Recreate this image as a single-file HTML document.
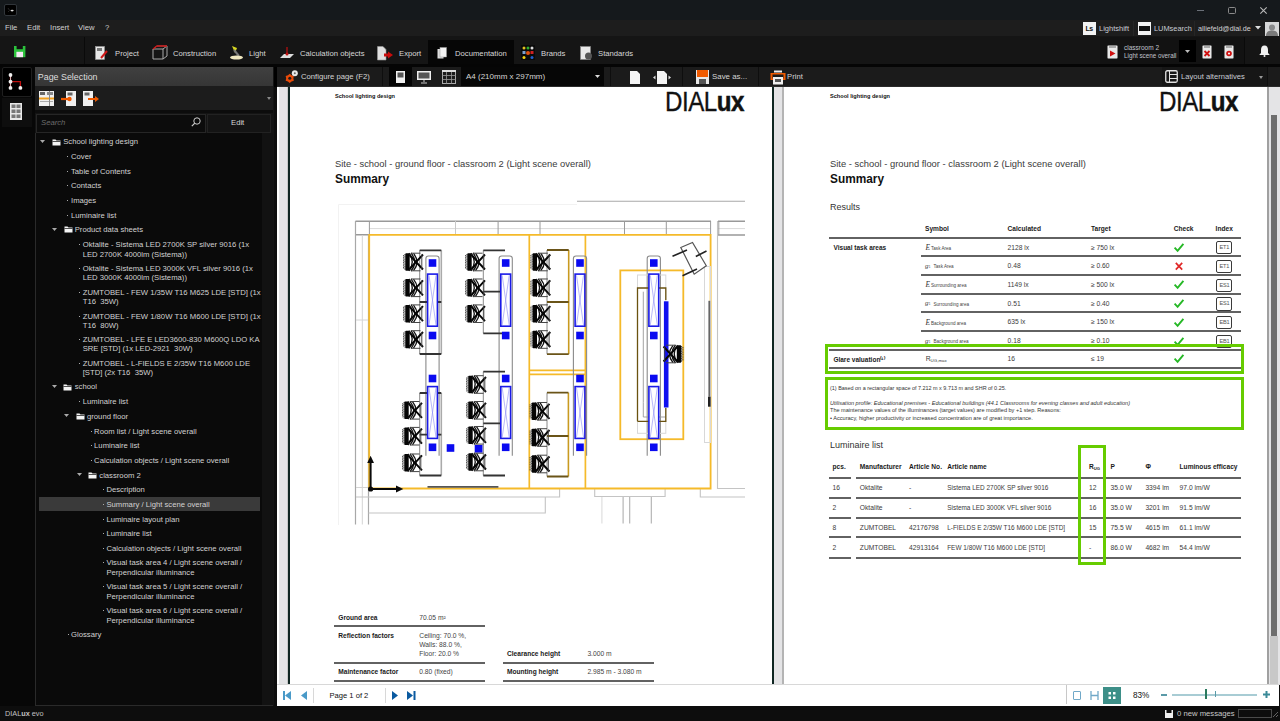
<!DOCTYPE html>
<html><head><meta charset="utf-8">
<style>
*{margin:0;padding:0;box-sizing:border-box}
html,body{width:1280px;height:721px;overflow:hidden;background:#0d0d0d;font-family:"Liberation Sans",sans-serif;position:relative}
.a{position:absolute}
.t{position:absolute;white-space:pre;line-height:1}
svg{overflow:visible}
</style></head><body>
<div class="a" style="left:0px;top:0px;width:1280px;height:20px;background:#15191c;"></div>
<div class="a" style="left:4px;top:4px;width:13px;height:12px;background:#000;border:1px solid #30353a;border-radius:2px"></div>
<svg class="a" style="left:0;top:0" width="20" height="20"><path d="M8 8L9.6 10.4L8 12" fill="none" stroke="#2a2a2a" stroke-width="0.9"/><ellipse cx="12.1" cy="10.6" rx="1.6" ry="0.8" fill="#e0e0e0"/></svg>
<div class="a" style="left:1197px;top:9.5px;width:6.5px;height:1.2px;background:#6a7078;"></div>
<div class="a" style="left:1228px;top:6.5px;width:7.5px;height:7.5px;background:transparent;border:1.1px solid #8a8a8a;border-radius:1.5px"></div>
<svg class="a" style="left:1259.7px;top:7px" width="7" height="7"><path d="M0.3 0.3L6.7 6.7M6.7 0.3L0.3 6.7" stroke="#b8b8b8" stroke-width="1.1"/></svg>
<div class="a" style="left:0px;top:20px;width:1280px;height:16px;background:#1d1d1d;"></div>
<div class="t" style="left:5px;top:23.65px;font-size:7.7px;color:#d0d0d0;font-weight:normal;">File</div>
<div class="t" style="left:27px;top:23.65px;font-size:7.7px;color:#d0d0d0;font-weight:normal;">Edit</div>
<div class="t" style="left:50px;top:23.65px;font-size:7.7px;color:#d0d0d0;font-weight:normal;">Insert</div>
<div class="t" style="left:78px;top:23.65px;font-size:7.7px;color:#d0d0d0;font-weight:normal;">View</div>
<div class="t" style="left:105px;top:23.65px;font-size:7.7px;color:#d0d0d0;font-weight:normal;">?</div>
<div class="a" style="left:1083px;top:22px;width:13px;height:13px;background:#f2f2f2;"></div>
<div class="t" style="left:1085.5px;top:25.00px;font-size:7px;color:#111;font-weight:bold;letter-spacing:-0.5px">Ls</div>
<div class="t" style="left:1099px;top:24.75px;font-size:7.5px;color:#c8ccd4;font-weight:normal;">Lightshift</div>
<div class="a" style="left:1133px;top:21px;width:1px;height:15px;background:#262626;"></div>
<div class="a" style="left:1138px;top:22px;width:13px;height:13px;background:#f2f2f2;"></div>
<div class="a" style="left:1139px;top:26px;width:11px;height:5px;background:#111;"></div>
<div class="t" style="left:1154px;top:24.80px;font-size:7.4px;color:#c8ccd4;font-weight:normal;">LUMsearch</div>
<div class="a" style="left:1194px;top:21px;width:1px;height:15px;background:#262626;"></div>
<div class="t" style="left:1198px;top:24.90px;font-size:7.2px;color:#d4d4d4;font-weight:normal;">alliefeld@dial.de</div>
<svg class="a" style="left:1255px;top:26px" width="6" height="4"><path d="M0 0H6L3 3.5Z" fill="#ddd"/></svg>
<div class="a" style="left:1265px;top:22px;width:14px;height:14px;background:#d8d8d8;"></div>
<svg class="a" style="left:1265px;top:22px" width="14" height="14"><circle cx="7" cy="5.5" r="3" fill="#8a8a8a"/><path d="M1 14C1 9.5 4 8.5 7 8.5S13 9.5 13 14Z" fill="#7a7a7a"/></svg>
<div class="a" style="left:0px;top:36px;width:1280px;height:28px;background:#151515;"></div>
<div class="a" style="left:0px;top:64px;width:1280px;height:3px;background:#050505;"></div>
<svg class="a" style="left:14px;top:46px" width="12" height="11.5"><rect x="0" y="0" width="11.4" height="11.2" fill="#2cc23c"/><rect x="2.6" y="0" width="6.2" height="3.2" fill="#111"/><rect x="2.4" y="5.8" width="6.6" height="5.4" fill="#f4e8f4"/></svg>
<div class="a" style="left:84px;top:37px;width:1px;height:27px;background:#0a0a0a;"></div>
<div class="a" style="left:428px;top:40px;width:86px;height:24px;background:#060606;"></div>
<svg class="a" style="left:95px;top:46px" width="14" height="15"><rect x="0.5" y="0.5" width="9" height="13" fill="#e8e8e8" stroke="#999" stroke-width="0.6"/><rect x="2" y="2" width="5" height="3" fill="#777"/><path d="M6 12L12 5" stroke="#d01818" stroke-width="2"/></svg>
<div class="t" style="left:115px;top:49.65px;font-size:7.7px;color:#d8d8d8;font-weight:normal;">Project</div>
<svg class="a" style="left:152px;top:45px" width="16" height="15"><path d="M1 4L5 1H15V11L11 14H1Z" fill="none" stroke="#aaa" stroke-width="1"/><path d="M1 4H11V14M11 4L15 1" fill="none" stroke="#aaa" stroke-width="1"/><path d="M1 4L5 1H15" fill="none" stroke="#c81010" stroke-width="1.3"/></svg>
<div class="t" style="left:173px;top:49.65px;font-size:7.7px;color:#d8d8d8;font-weight:normal;">Construction</div>
<svg class="a" style="left:229px;top:45px" width="15" height="15"><path d="M3 1L8 3L6 8Z" fill="#d8d820"/><path d="M5 5L10 11" stroke="#777" stroke-width="2"/><ellipse cx="7.5" cy="12.5" rx="6.5" ry="2" fill="#f0e8c0"/></svg>
<div class="t" style="left:249px;top:49.65px;font-size:7.7px;color:#d8d8d8;font-weight:normal;">Light</div>
<svg class="a" style="left:280px;top:47px" width="14" height="12"><path d="M0 11L4 7H14L10 11Z" fill="#ddd"/><path d="M7 0V7" stroke="#c01010" stroke-width="1.2"/><circle cx="7" cy="7" r="1.5" fill="#c01010"/></svg>
<div class="t" style="left:300px;top:49.65px;font-size:7.7px;color:#d8d8d8;font-weight:normal;">Calculation objects</div>
<svg class="a" style="left:377px;top:46px" width="17" height="15"><path d="M0.5 0.5H6L9 3.5V14H0.5Z" fill="#e0e0e0" stroke="#999" stroke-width="0.6"/><path d="M7 9H12" stroke="#c80c0c" stroke-width="3"/><path d="M11 5.5L16 9L11 12.5Z" fill="#c80c0c"/></svg>
<div class="t" style="left:399px;top:49.65px;font-size:7.7px;color:#d8d8d8;font-weight:normal;">Export</div>
<svg class="a" style="left:437px;top:47px" width="10" height="12"><rect x="0.5" y="2" width="6" height="9.5" fill="#ddd"/><rect x="3" y="0.5" width="6.5" height="9.5" fill="#f4f4f4" stroke="#999" stroke-width="0.5"/></svg>
<div class="t" style="left:455px;top:49.65px;font-size:7.7px;color:#d8d8d8;font-weight:normal;">Documentation</div>
<svg class="a" style="left:521px;top:45px" width="14" height="15"><rect x="0" y="0" width="14" height="15" fill="#0a0a0a"/><circle cx="3" cy="3" r="1.5" fill="#e0c020"/><circle cx="7" cy="3" r="1.5" fill="#30b030"/><circle cx="11" cy="3" r="1.5" fill="#ddd"/><rect x="1.5" y="6" width="3" height="3" fill="#7aa0d0"/><circle cx="7" cy="8" r="2" fill="#e05010"/><rect x="9.5" y="6" width="3" height="3" fill="#d02020"/><circle cx="3" cy="12.5" r="1.5" fill="#f0d010"/><circle cx="11" cy="12.5" r="1.5" fill="#2060d0"/></svg>
<div class="t" style="left:541px;top:49.65px;font-size:7.7px;color:#d8d8d8;font-weight:normal;">Brands</div>
<svg class="a" style="left:580px;top:46px" width="13" height="14"><rect x="0.5" y="0.5" width="10" height="13" fill="#e8e8e8" stroke="#888" stroke-width="0.6"/><circle cx="8.5" cy="10" r="3.5" fill="#555"/></svg>
<div class="t" style="left:598px;top:49.65px;font-size:7.7px;color:#d8d8d8;font-weight:normal;">Standards</div>
<div class="a" style="left:1100px;top:37px;width:144px;height:27px;background:#121212;"></div>
<svg class="a" style="left:1107px;top:45px" width="11" height="14"><rect x="0.5" y="0.5" width="10" height="13" rx="1" fill="#e8e8e8" stroke="#888" stroke-width="0.5"/><rect x="2" y="1.5" width="7" height="1" fill="#666"/><path d="M3 5.5L8.5 8.5L3 11.5Z" fill="#d01010"/></svg>
<div class="t" style="left:1124px;top:44.75px;font-size:6.5px;color:#c0c4cc;font-weight:normal;">classroom 2</div>
<div class="t" style="left:1124px;top:52.85px;font-size:6.3px;color:#c0c4cc;font-weight:normal;">Light scene overall</div>
<div class="a" style="left:1179px;top:40px;width:17px;height:22px;background:#000;"></div>
<svg class="a" style="left:1185px;top:50px" width="5" height="3"><path d="M0 0H5L2.5 3Z" fill="#bbb"/></svg>
<svg class="a" style="left:1202px;top:45px" width="10" height="14"><rect x="0.5" y="0.5" width="9" height="13" rx="1" fill="#e8e8e8" stroke="#888" stroke-width="0.5"/><rect x="2" y="1.5" width="6" height="1" fill="#666"/><path d="M2.5 6L7.5 11M7.5 6L2.5 11" stroke="#d01010" stroke-width="1.8"/></svg>
<svg class="a" style="left:1224px;top:45px" width="10" height="14"><rect x="0.5" y="0.5" width="9" height="13" rx="1" fill="#e8e8e8" stroke="#888" stroke-width="0.5"/><rect x="2" y="1.5" width="6" height="1" fill="#666"/><circle cx="5" cy="8.5" r="2.8" fill="#d01010"/><circle cx="5" cy="8.5" r="1" fill="#fff"/></svg>
<div class="a" style="left:1244px;top:37px;width:1px;height:27px;background:#0a0a0a;"></div>
<svg class="a" style="left:1259px;top:45px" width="11" height="12"><path d="M5.5 0.5C3 0.5 2 2.5 2 5V8L0.5 9.5V10H10.5V9.5L9 8V5C9 2.5 8 0.5 5.5 0.5Z" fill="#f0f0f0"/><circle cx="5.5" cy="11" r="1" fill="#f0f0f0"/></svg>
<div class="a" style="left:0px;top:67px;width:35px;height:640px;background:#070707;"></div>
<div class="a" style="left:2px;top:67px;width:30px;height:30px;background:#000;border:1px solid #1f1f1f;border-radius:2px"></div>
<svg class="a" style="left:0;top:67px" width="32" height="30"><path d="M10.5 8V21M10.5 14.7H20.4V21" fill="none" stroke="#c01010" stroke-width="1.3"/><path d="M10.5 8V21" stroke="#ddd" stroke-width="0.8"/><circle cx="10.5" cy="8" r="1.9" fill="#f0f0f0"/><circle cx="10.5" cy="14.7" r="1.9" fill="#f0f0f0"/><circle cx="10.5" cy="20.9" r="1.9" fill="#f0f0f0"/><circle cx="20.4" cy="20.9" r="1.9" fill="#f0f0f0"/></svg>
<div class="a" style="left:2px;top:98px;width:30px;height:29px;background:#0e0e0e;"></div>
<svg class="a" style="left:10px;top:103px" width="12" height="17"><rect x="0" y="0" width="12" height="17" fill="#e8e8e8"/><rect x="1.5" y="1.5" width="4" height="3.5" fill="#777"/><rect x="6.5" y="1.5" width="4" height="3.5" fill="#777"/><rect x="1.5" y="6.5" width="4" height="3.5" fill="#777"/><rect x="6.5" y="6.5" width="4" height="3.5" fill="#777"/><rect x="1.5" y="11.5" width="4" height="3.5" fill="#777"/><rect x="6.5" y="11.5" width="4" height="3.5" fill="#777"/></svg>
<div class="a" style="left:35px;top:67px;width:239px;height:640px;background:#141414;"></div>
<div class="a" style="left:35px;top:67px;width:238px;height:19px;background:#3c3c3c;background:linear-gradient(#404040,#363636)"></div>
<div class="t" style="left:37.8px;top:72.75px;font-size:8.9px;color:#dedede;font-weight:normal;">Page Selection</div>
<div class="a" style="left:35px;top:86px;width:238px;height:24px;background:#1c1c1c;"></div>
<div class="a" style="left:35px;top:110px;width:238px;height:3px;background:#0c0c0c;"></div>
<svg class="a" style="left:39px;top:91px" width="15" height="15"><rect x="0" y="0" width="15" height="15" fill="#f0f0f0"/><rect x="1" y="1" width="5" height="3" fill="#666"/><rect x="8" y="1" width="6" height="3" fill="#888"/><rect x="0" y="6.5" width="15" height="2" fill="#f0a020"/><rect x="1" y="10" width="13" height="1" fill="#aaa"/><rect x="10" y="0" width="1" height="15" fill="#888"/></svg>
<svg class="a" style="left:61px;top:91px" width="15" height="15"><rect x="5" y="0" width="10" height="15" fill="#f0f0f0"/><rect x="6.5" y="1.5" width="5" height="3" fill="#666"/><path d="M0 8H8" stroke="#f05a00" stroke-width="2.2"/><circle cx="8.5" cy="8" r="2.2" fill="#f05a00"/></svg>
<svg class="a" style="left:83px;top:91px" width="16" height="15"><rect x="0" y="0" width="10" height="15" fill="#f0f0f0"/><rect x="1.5" y="1.5" width="5" height="3" fill="#666"/><path d="M5 8H13" stroke="#f05a00" stroke-width="2"/><path d="M12 5L16 8L12 11Z" fill="#f05a00"/></svg>
<svg class="a" style="left:267px;top:97px" width="4" height="3"><path d="M0 0H4L2 3Z" fill="#888"/></svg>
<div class="a" style="left:36px;top:114px;width:170px;height:19px;background:#0c0c0c;border:1px solid #262626"></div>
<div class="t" style="left:41px;top:119.15px;font-size:7.7px;color:#6c6c6c;font-weight:normal;font-style:italic">Search</div>
<svg class="a" style="left:191px;top:117px" width="10" height="10"><circle cx="6" cy="4" r="3.2" fill="none" stroke="#ccc" stroke-width="1"/><path d="M3.8 6.2L0.8 9.2" stroke="#ccc" stroke-width="1.2"/></svg>
<div class="a" style="left:207px;top:114px;width:64px;height:19px;background:#141414;border:1px solid #222"></div>
<div class="t" style="left:231px;top:119.15px;font-size:7.7px;color:#d8d8d8;font-weight:normal;">Edit</div>
<div class="a" style="left:35px;top:133px;width:238px;height:573px;background:#0a0a0a;border-left:1px solid #2a2a2a;border-bottom:1px solid #2a2a2a"></div>
<div class="a" style="left:262px;top:133px;width:11px;height:572px;background:#121212;"></div>
<div class="a" style="left:39px;top:497px;width:221px;height:14px;background:#3a3a3a;"></div>
<svg class="a" style="left:40.1px;top:140.0px" width="5" height="3"><path d="M0 0H5L2.5 3Z" fill="#aaa"/></svg>
<svg class="a" style="left:52px;top:137.5px" width="9" height="8"><path d="M0.5 1.5H3.5L4.5 2.5H8.5V7.5H0.5Z" fill="#f4f4f4"/><path d="M0.5 3.5H8.5" stroke="#0a0a0a" stroke-width="0.7"/></svg>
<div class="t" style="left:63.2px;top:138.45px;font-size:7.7px;color:#d2d2d2;font-weight:normal;">School lighting design</div>
<div class="a" style="left:67px;top:156px;width:1px;height:1px;background:#aaa;"></div>
<div class="t" style="left:71px;top:153.25px;font-size:7.7px;color:#d2d2d2;font-weight:normal;">Cover</div>
<div class="a" style="left:67px;top:171px;width:1px;height:1px;background:#aaa;"></div>
<div class="t" style="left:71px;top:167.75px;font-size:7.7px;color:#d2d2d2;font-weight:normal;">Table of Contents</div>
<div class="a" style="left:67px;top:185px;width:1px;height:1px;background:#aaa;"></div>
<div class="t" style="left:71px;top:182.15px;font-size:7.7px;color:#d2d2d2;font-weight:normal;">Contacts</div>
<div class="a" style="left:67px;top:200px;width:1px;height:1px;background:#aaa;"></div>
<div class="t" style="left:71px;top:196.95px;font-size:7.7px;color:#d2d2d2;font-weight:normal;">Images</div>
<div class="a" style="left:67px;top:215px;width:1px;height:1px;background:#aaa;"></div>
<div class="t" style="left:71px;top:211.55px;font-size:7.7px;color:#d2d2d2;font-weight:normal;">Luminaire list</div>
<svg class="a" style="left:52.4px;top:227.8px" width="5" height="3"><path d="M0 0H5L2.5 3Z" fill="#aaa"/></svg>
<svg class="a" style="left:64px;top:225.3px" width="9" height="8"><path d="M0.5 1.5H3.5L4.5 2.5H8.5V7.5H0.5Z" fill="#f4f4f4"/><path d="M0.5 3.5H8.5" stroke="#0a0a0a" stroke-width="0.7"/></svg>
<div class="t" style="left:74.7px;top:226.25px;font-size:7.7px;color:#d2d2d2;font-weight:normal;">Product data sheets</div>
<div class="a" style="left:79px;top:244px;width:1px;height:1px;background:#aaa;"></div>
<div class="t" style="left:82.7px;top:241.35px;font-size:7.7px;color:#d2d2d2;font-weight:normal;">Oktalite - Sistema LED 2700K SP silver 9016 (1x</div>
<div class="t" style="left:82.7px;top:250.65px;font-size:7.7px;color:#d2d2d2;font-weight:normal;">LED 2700K 4000lm (Sistema))</div>
<div class="a" style="left:79px;top:268px;width:1px;height:1px;background:#aaa;"></div>
<div class="t" style="left:82.7px;top:264.95px;font-size:7.7px;color:#d2d2d2;font-weight:normal;">Oktalite - Sistema LED 3000K VFL silver 9016 (1x</div>
<div class="t" style="left:82.7px;top:274.25px;font-size:7.7px;color:#d2d2d2;font-weight:normal;">LED 3000K 4000lm (Sistema))</div>
<div class="a" style="left:79px;top:292px;width:1px;height:1px;background:#aaa;"></div>
<div class="t" style="left:82.7px;top:288.85px;font-size:7.7px;color:#d2d2d2;font-weight:normal;">ZUMTOBEL - FEW 1/35W T16 M625 LDE [STD] (1x</div>
<div class="t" style="left:82.7px;top:298.15px;font-size:7.7px;color:#d2d2d2;font-weight:normal;">T16  35W)</div>
<div class="a" style="left:79px;top:316px;width:1px;height:1px;background:#aaa;"></div>
<div class="t" style="left:82.7px;top:312.55px;font-size:7.7px;color:#d2d2d2;font-weight:normal;">ZUMTOBEL - FEW 1/80W T16 M600 LDE [STD] (1x</div>
<div class="t" style="left:82.7px;top:321.85px;font-size:7.7px;color:#d2d2d2;font-weight:normal;">T16  80W)</div>
<div class="a" style="left:79px;top:339px;width:1px;height:1px;background:#aaa;"></div>
<div class="t" style="left:82.7px;top:336.15px;font-size:7.7px;color:#d2d2d2;font-weight:normal;">ZUMTOBEL - LFE E LED3600-830 M600Q LDO KA</div>
<div class="t" style="left:82.7px;top:345.45px;font-size:7.7px;color:#d2d2d2;font-weight:normal;">SRE [STD] (1x LED-2921  30W)</div>
<div class="a" style="left:79px;top:363px;width:1px;height:1px;background:#aaa;"></div>
<div class="t" style="left:82.7px;top:359.75px;font-size:7.7px;color:#d2d2d2;font-weight:normal;">ZUMTOBEL - L-FIELDS E 2/35W T16 M600 LDE</div>
<div class="t" style="left:82.7px;top:369.05px;font-size:7.7px;color:#d2d2d2;font-weight:normal;">[STD] (2x T16  35W)</div>
<svg class="a" style="left:52.4px;top:385.0px" width="5" height="3"><path d="M0 0H5L2.5 3Z" fill="#aaa"/></svg>
<svg class="a" style="left:63px;top:382.5px" width="9" height="8"><path d="M0.5 1.5H3.5L4.5 2.5H8.5V7.5H0.5Z" fill="#f4f4f4"/><path d="M0.5 3.5H8.5" stroke="#0a0a0a" stroke-width="0.7"/></svg>
<div class="t" style="left:74.7px;top:383.45px;font-size:7.7px;color:#d2d2d2;font-weight:normal;">school</div>
<div class="a" style="left:79px;top:401px;width:1px;height:1px;background:#aaa;"></div>
<div class="t" style="left:82.8px;top:398.15px;font-size:7.7px;color:#d2d2d2;font-weight:normal;">Luminaire list</div>
<svg class="a" style="left:63.7px;top:414.4px" width="5" height="3"><path d="M0 0H5L2.5 3Z" fill="#aaa"/></svg>
<svg class="a" style="left:75.7px;top:411.9px" width="9" height="8"><path d="M0.5 1.5H3.5L4.5 2.5H8.5V7.5H0.5Z" fill="#f4f4f4"/><path d="M0.5 3.5H8.5" stroke="#0a0a0a" stroke-width="0.7"/></svg>
<div class="t" style="left:87px;top:412.85px;font-size:7.7px;color:#d2d2d2;font-weight:normal;">ground floor</div>
<div class="a" style="left:90.8px;top:431px;width:1px;height:1px;background:#aaa;"></div>
<div class="t" style="left:94.1px;top:427.55px;font-size:7.7px;color:#d2d2d2;font-weight:normal;">Room list / Light scene overall</div>
<div class="a" style="left:90.8px;top:445px;width:1px;height:1px;background:#aaa;"></div>
<div class="t" style="left:94.1px;top:442.25px;font-size:7.7px;color:#d2d2d2;font-weight:normal;">Luminaire list</div>
<div class="a" style="left:90.8px;top:460px;width:1px;height:1px;background:#aaa;"></div>
<div class="t" style="left:94.1px;top:456.95px;font-size:7.7px;color:#d2d2d2;font-weight:normal;">Calculation objects / Light scene overall</div>
<svg class="a" style="left:76.5px;top:473.1px" width="5" height="3"><path d="M0 0H5L2.5 3Z" fill="#aaa"/></svg>
<svg class="a" style="left:88px;top:470.6px" width="9" height="8"><path d="M0.5 1.5H3.5L4.5 2.5H8.5V7.5H0.5Z" fill="#f4f4f4"/><path d="M0.5 3.5H8.5" stroke="#0a0a0a" stroke-width="0.7"/></svg>
<div class="t" style="left:99.3px;top:471.55px;font-size:7.7px;color:#d2d2d2;font-weight:normal;">classroom 2</div>
<div class="a" style="left:103px;top:489px;width:1px;height:1px;background:#aaa;"></div>
<div class="t" style="left:106.4px;top:486.25px;font-size:7.7px;color:#d2d2d2;font-weight:normal;">Description</div>
<div class="a" style="left:103px;top:504px;width:1px;height:1px;background:#aaa;"></div>
<div class="t" style="left:106.4px;top:500.95px;font-size:7.7px;color:#d2d2d2;font-weight:normal;">Summary / Light scene overall</div>
<div class="a" style="left:103px;top:519px;width:1px;height:1px;background:#aaa;"></div>
<div class="t" style="left:106.4px;top:515.65px;font-size:7.7px;color:#d2d2d2;font-weight:normal;">Luminaire layout plan</div>
<div class="a" style="left:103px;top:533px;width:1px;height:1px;background:#aaa;"></div>
<div class="t" style="left:106.4px;top:530.25px;font-size:7.7px;color:#d2d2d2;font-weight:normal;">Luminaire list</div>
<div class="a" style="left:103px;top:548px;width:1px;height:1px;background:#aaa;"></div>
<div class="t" style="left:106.4px;top:544.95px;font-size:7.7px;color:#d2d2d2;font-weight:normal;">Calculation objects / Light scene overall</div>
<div class="a" style="left:103px;top:562px;width:1px;height:1px;background:#aaa;"></div>
<div class="t" style="left:106.4px;top:559.35px;font-size:7.7px;color:#d2d2d2;font-weight:normal;">Visual task area 4 / Light scene overall /</div>
<div class="t" style="left:106.4px;top:568.75px;font-size:7.7px;color:#d2d2d2;font-weight:normal;">Perpendicular illuminance</div>
<div class="a" style="left:103px;top:586px;width:1px;height:1px;background:#aaa;"></div>
<div class="t" style="left:106.4px;top:583.25px;font-size:7.7px;color:#d2d2d2;font-weight:normal;">Visual task area 5 / Light scene overall /</div>
<div class="t" style="left:106.4px;top:592.65px;font-size:7.7px;color:#d2d2d2;font-weight:normal;">Perpendicular illuminance</div>
<div class="a" style="left:103px;top:610px;width:1px;height:1px;background:#aaa;"></div>
<div class="t" style="left:106.4px;top:607.25px;font-size:7.7px;color:#d2d2d2;font-weight:normal;">Visual task area 6 / Light scene overall /</div>
<div class="t" style="left:106.4px;top:616.65px;font-size:7.7px;color:#d2d2d2;font-weight:normal;">Perpendicular illuminance</div>
<div class="a" style="left:67.6px;top:634px;width:1px;height:1px;background:#aaa;"></div>
<div class="t" style="left:71px;top:630.85px;font-size:7.7px;color:#d2d2d2;font-weight:normal;">Glossary</div>
<div class="a" style="left:274px;top:67px;width:1006px;height:20px;background:#000;"></div>
<div class="a" style="left:277px;top:67px;width:1003px;height:19px;background:#1b1b1b;"></div>
<svg class="a" style="left:280px;top:66px" width="30" height="22"><path d="M9.75 7.65L11.55 9.23L13.82 10.00L13.35 12.35L13.82 14.70L11.55 15.47L9.75 17.05L7.95 15.47L5.68 14.70L6.15 12.35L5.68 10.00L7.95 9.23Z" fill="#e84a08"/><circle cx="9.75" cy="12.349999999999994" r="1.5" fill="#1b1b1b"/><circle cx="14.8" cy="7.3" r="3" fill="#e8e8e8"/><circle cx="14.8" cy="7.3" r="1" fill="#666"/></svg>
<div class="t" style="left:301px;top:73.15px;font-size:7.7px;color:#d4d4d4;font-weight:normal;">Configure page (F2)</div>
<div class="a" style="left:382px;top:67px;width:1px;height:19px;background:#0e0e0e;"></div>
<div class="a" style="left:389px;top:67px;width:23px;height:19px;background:#050505;"></div>
<svg class="a" style="left:396px;top:71px" width="9" height="12"><rect x="0" y="0" width="9" height="12" fill="#f0f0f0"/><rect x="1.5" y="1.5" width="6" height="5" fill="#555"/></svg>
<svg class="a" style="left:417px;top:71px" width="14" height="12"><rect x="0" y="0" width="14" height="9" fill="#eee"/><rect x="1.5" y="1.5" width="11" height="6" fill="#555"/><path d="M7 9V11M4 12H10" stroke="#ccc" stroke-width="1"/></svg>
<svg class="a" style="left:442px;top:70px" width="14" height="14"><rect x="0.5" y="0.5" width="13" height="13" fill="none" stroke="#aaa"/><rect x="0" y="0" width="14" height="2" fill="#ddd"/><path d="M4.5 2V14M9.5 2V14M0 5.5H14M0 9.5H14" stroke="#999" stroke-width="0.8"/></svg>
<div class="a" style="left:461px;top:67px;width:143px;height:19px;background:#060606;"></div>
<div class="t" style="left:466px;top:72.50px;font-size:8.0px;color:#d4d4d4;font-weight:normal;">A4 (210mm x 297mm)</div>
<svg class="a" style="left:595px;top:75px" width="5" height="3"><path d="M0 0H5L2.5 3Z" fill="#ddd"/></svg>
<div class="a" style="left:610px;top:67px;width:1px;height:19px;background:#0e0e0e;"></div>
<svg class="a" style="left:630px;top:71px" width="10" height="13"><path d="M0 0H7L10 3V13H0Z" fill="#f4f4f4"/></svg>
<svg class="a" style="left:653px;top:71px" width="18" height="13"><path d="M4 0H11L14 3V13H4Z" fill="#f4f4f4"/><path d="M0 6.5L2.5 4.5V8.5Z M18 6.5L15.5 4.5V8.5Z" fill="#ddd"/></svg>
<div class="a" style="left:682px;top:67px;width:1px;height:19px;background:#0e0e0e;"></div>
<svg class="a" style="left:696px;top:70px" width="13" height="14"><rect x="0" y="0" width="13" height="14" fill="#e8e8e8"/><rect x="1" y="0" width="11" height="7" fill="#f05a00"/><rect x="3" y="9" width="7" height="5" fill="#555"/></svg>
<div class="t" style="left:712px;top:72.55px;font-size:7.9px;color:#d4d4d4;font-weight:normal;">Save as...</div>
<div class="a" style="left:758px;top:67px;width:1px;height:19px;background:#0e0e0e;"></div>
<svg class="a" style="left:770px;top:70px" width="16" height="15"><rect x="4" y="0.5" width="8" height="2" fill="#eee"/><rect x="0.5" y="3" width="15" height="7" fill="#f05a00"/><rect x="2.5" y="4.5" width="11" height="4" fill="#1b1b1b"/><rect x="3" y="7" width="10" height="7.5" fill="#f0f0f0"/><rect x="5" y="9" width="6" height="3" fill="#555"/></svg>
<div class="t" style="left:787px;top:73.15px;font-size:7.7px;color:#d4d4d4;font-weight:normal;">Print</div>
<div class="a" style="left:1162px;top:67px;width:105px;height:19px;background:#161616;"></div>
<svg class="a" style="left:1165px;top:70px" width="13" height="13"><rect x="0.75" y="0.75" width="11.5" height="11.5" rx="1.5" fill="none" stroke="#e0e0e0" stroke-width="1.3"/><path d="M4.5 1V12M4.5 4.5H12M4.5 8.5H12" stroke="#e0e0e0" stroke-width="1"/></svg>
<div class="t" style="left:1181px;top:73.20px;font-size:7.6px;color:#c8ccd4;font-weight:normal;">Layout alternatives</div>
<svg class="a" style="left:1259px;top:76px" width="4" height="3"><path d="M0 0H4L2 3Z" fill="#999"/></svg>
<div class="a" style="left:1267px;top:67px;width:1px;height:19px;background:#0e0e0e;"></div>
<div class="a" style="left:277px;top:86px;width:1003px;height:599px;background:#ffffff;"></div>
<div class="a" style="left:277px;top:86px;width:1003px;height:1px;background:#2a2a2a;"></div>
<div class="a" style="left:279px;top:87px;width:8px;height:597px;background:#e4e4e6;"></div>
<div class="a" style="left:287px;top:87px;width:2px;height:597px;background:#c8c8c8;"></div>
<div class="a" style="left:288px;top:87px;width:2px;height:597px;background:#0f2622;"></div>
<div class="a" style="left:772px;top:87px;width:2px;height:597px;background:#0f2622;"></div>
<div class="a" style="left:774px;top:87px;width:8px;height:597px;background:#e4e4e6;"></div>
<div class="a" style="left:782px;top:87px;width:2px;height:597px;background:#b4b4b4;"></div>
<div class="a" style="left:1267px;top:87px;width:2px;height:597px;background:#a0a0a0;"></div>
<div class="a" style="left:1269px;top:87px;width:11px;height:597px;background:#e4e4e6;"></div>
<div class="a" style="left:1271px;top:115px;width:6px;height:521px;background:#6e6e6e;"></div>
<div class="a" style="left:1270px;top:636px;width:8px;height:48px;background:#c8c8c8;"></div>
<div class="a" style="left:277px;top:684px;width:1003px;height:1px;background:#d8d8d8;"></div>
<div class="a" style="left:277px;top:685px;width:1002px;height:21px;background:#ffffff;"></div>
<svg class="a" style="left:283px;top:691px" width="8" height="9"><rect x="0" y="0" width="2" height="9" fill="#4a9ac8"/><path d="M8 0V9L2 4.5Z" fill="#4a9ac8"/></svg>
<svg class="a" style="left:301px;top:691px" width="6" height="9"><path d="M6 0V9L0 4.5Z" fill="#4a9ac8"/></svg>
<div class="a" style="left:313px;top:688px;width:1px;height:15px;background:#d8d8d8;"></div>
<div class="t" style="left:329.5px;top:692.20px;font-size:7.6px;color:#111;font-weight:normal;">Page 1 of 2</div>
<div class="a" style="left:385px;top:688px;width:1px;height:15px;background:#d8d8d8;"></div>
<svg class="a" style="left:392px;top:691px" width="6" height="9"><path d="M0 0V9L6 4.5Z" fill="#0a5aa0"/></svg>
<svg class="a" style="left:407px;top:691px" width="9" height="9"><path d="M0 0V9L6 4.5Z" fill="#0a5aa0"/><rect x="6.5" y="0" width="2" height="9" fill="#0a5aa0"/></svg>
<div class="a" style="left:1066px;top:685px;width:1px;height:19px;background:#c8c8c8;"></div>
<div class="a" style="left:1073px;top:691px;width:8px;height:9px;background:transparent;border:1.3px solid #70a8c8;border-radius:1px"></div>
<svg class="a" style="left:1090px;top:691px" width="9" height="9"><path d="M1 0V9M8 0V9M1 4.5H8" stroke="#70a8c8" stroke-width="1.3"/></svg>
<div class="a" style="left:1103px;top:687px;width:18px;height:17px;background:#3d8f88;"></div>
<svg class="a" style="left:1103px;top:687px" width="18" height="17"><rect x="5.5" y="5" width="2.5" height="2.5" fill="#fff"/><rect x="10" y="5" width="2.5" height="2.5" fill="#fff"/><rect x="5.5" y="9.5" width="2.5" height="2.5" fill="#fff"/><rect x="10" y="9.5" width="2.5" height="2.5" fill="#fff"/></svg>
<div class="t" style="left:1133px;top:692.20px;font-size:8.2px;color:#111;font-weight:normal;">83%</div>
<div class="a" style="left:1161px;top:694px;width:6px;height:2px;background:#5a9aa8;"></div>
<div class="a" style="left:1172px;top:694px;width:85px;height:2px;background:#a8ccd4;"></div>
<div class="a" style="left:1205px;top:689px;width:2px;height:10px;background:#2a7a5e;"></div>
<div class="a" style="left:1215px;top:691px;width:1px;height:6px;background:#5a9aa8;"></div>
<svg class="a" style="left:1263px;top:691px" width="7" height="7"><path d="M3.5 0V7M0 3.5H7" stroke="#3a8a98" stroke-width="2"/></svg>
<div class="a" style="left:0px;top:706px;width:1280px;height:15px;background:#0d0d0d;"></div>
<div class="t" style="left:5px;top:709.85px;font-size:7.3px;color:#c0c0c0;font-weight:normal;">DIAL<b>ux</b> evo</div>
<svg class="a" style="left:1165px;top:710px" width="8" height="8"><rect x="0" y="0" width="8" height="8" fill="#f0f0f0"/><rect x="1.5" y="0" width="5" height="3" fill="#0d0d0d"/></svg>
<div class="t" style="left:1177px;top:710.15px;font-size:7.7px;color:#c8c8c8;font-weight:normal;">0 new messages</div>
<div class="a" style="left:1238px;top:709px;width:34px;height:9px;background:transparent;border:1px solid #4a4a4a"></div>
<svg class="a" style="left:1272px;top:711px" width="7" height="7"><path d="M6 1L1 6M6 4L4 6" stroke="#777" stroke-width="0.8"/></svg>
<div class="t" style="left:335px;top:93.80px;font-size:5.6px;color:#111;font-weight:bold;">School lighting design</div>
<div class="t" style="left:665px;top:87.4px;font-size:28.3px;color:#111;letter-spacing:-0.6px;transform:scaleX(0.854);transform-origin:0 0;-webkit-text-stroke:0.35px #111">DIAL<b style="font-weight:bold;-webkit-text-stroke:0.5px #111">ux</b></div>
<div class="t" style="left:335px;top:158.70px;font-size:9.4px;color:#3a3a3a;font-weight:normal;">Site - school - ground floor - classroom 2 (Light scene overall)</div>
<div class="t" style="left:335px;top:173.67px;font-size:11.85px;color:#111;font-weight:bold;">Summary</div>
<svg class="a" style="left:0;top:0" width="1280" height="721"><path fill="none" d="M338.5 525V204.5H577" stroke="#f2f2f2" stroke-width="1"/><path fill="none" d="M577 201.3H745" stroke="#a8a8a8" stroke-width="1.1"/><path fill="none" d="M355.5 221.3H711M718 221.3H745M718 235H745M355.5 234.8H369" stroke="#999" stroke-width="1.4"/><path fill="none" d="M369 228.6H711M718 228.6H745" stroke="#dadada" stroke-width="1"/><path fill="none" d="M369.4 221V235M498.1 221V235M540 221V235M624.5 221V235M666.3 221V235M710.6 221V235M718.8 221V235" stroke="#9a9a9a" stroke-width="1"/><path fill="none" d="M455.5 221V235" stroke="#c8c8c8" stroke-width="1"/><path fill="none" d="M355.5 221V524.5M368.5 235V524.5" stroke="#a8a8a8" stroke-width="1.2"/><path fill="none" d="M362.3 235V524.5M356 320H368M356 487.5H368" stroke="#d4d4d4" stroke-width="1"/><path fill="none" d="M717.5 221V488.5H745" stroke="#c4c4c4" stroke-width="1.1"/><path fill="none" d="M356 497H559.6V488.5M368.5 513H545.3V497M594.7 488.5V496.5H665.1V488.5M700.3 488.5V497H745" stroke="#c4c4c4" stroke-width="1.1"/><path fill="none" d="M623.1 497V523.6M629.7 497V523.6M651.3 497V523.6" stroke="#b0b0b0" stroke-width="1.1"/><path fill="none" d="M601.9 497V523.6" stroke="#dcdcdc" stroke-width="1.1"/><path d="M369.2 234.8H710.6V488.5H369.2Z" fill="none" stroke="#f5ba2a" stroke-width="1.8"/><path fill="none" d="M529.3 234.8V488.5M585.4 234.8V488.5M529.3 370.3H585.4M529.3 374.3H585.4" stroke="#f5ba2a" stroke-width="1.7"/><rect x="620.3" y="270.4" width="63" height="168.8" fill="none" stroke="#f5ba2a" stroke-width="1.8"/><path fill="none" d="M427.5 486.8H498.4" stroke="#555" stroke-width="1.8"/><path d="M425.9 258.5Q425.9 256 428.5 256H436.5Q439.1 256 439.1 258.5V455.8M425.9 258.5V455.8" fill="none" stroke="#8a8a8a" stroke-width="1.1"/><path d="M499.09999999999997 258.5Q499.09999999999997 256 501.7 256H509.7Q512.3 256 512.3 258.5V455.8M499.09999999999997 258.5V455.8" fill="none" stroke="#8a8a8a" stroke-width="1.1"/><path d="M573.4 258.5Q573.4 256 576 256H584Q586.6 256 586.6 258.5V455.8M573.4 258.5V455.8" fill="none" stroke="#8a8a8a" stroke-width="1.1"/><path d="M647.1999999999999 258.5Q647.1999999999999 256 649.8 256H657.8Q660.4 256 660.4 258.5V455.8M647.1999999999999 258.5V455.8" fill="none" stroke="#8a8a8a" stroke-width="1.1"/><path fill="none" d="M441.3 250.3V354" stroke="#aaa" stroke-width="1.6"/><path fill="none" d="M419.7 250.3V354" stroke="#8a8a8a" stroke-width="1"/><path fill="none" d="M419.7 250.3H441.3M419.7 354H441.3M419.7 302H441.3" stroke="#333" stroke-width="1.8"/><path fill="none" d="M483.3 250.3V333.3" stroke="#8a8a8a" stroke-width="1"/><path fill="none" d="M483.3 250.3H505M483.3 333.3H505M483.3 291.7H505" stroke="#333" stroke-width="1.8"/><path fill="none" d="M568.7 250V354.2" stroke="#c99a20" stroke-width="1.6"/><path fill="none" d="M547 250V354.2" stroke="#8a8a8a" stroke-width="1"/><path fill="none" d="M547 250H568.7M547 354.2H568.7M547 302H568.7" stroke="#6a5418" stroke-width="1.8"/><path fill="none" d="M441.3 393V475.5" stroke="#aaa" stroke-width="1.6"/><path fill="none" d="M419.7 393V475.5" stroke="#8a8a8a" stroke-width="1"/><path fill="none" d="M419.7 393H441.3M419.7 475.5H441.3M419.7 434.7H441.3" stroke="#333" stroke-width="1.8"/><path fill="none" d="M483.3 371.7V475.5" stroke="#8a8a8a" stroke-width="1"/><path fill="none" d="M483.3 371.7H505M483.3 475.5H505M483.3 423.3H505" stroke="#333" stroke-width="1.8"/><path fill="none" d="M568.4 392.6V476.5" stroke="#c99a20" stroke-width="1.6"/><path fill="none" d="M547 392.6V476.5" stroke="#8a8a8a" stroke-width="1"/><path fill="none" d="M547 392.6H568.4M547 476.5H568.4M547 436H568.4" stroke="#6a5418" stroke-width="1.8"/><rect x="637.5" y="275" width="28.3" height="158.3" fill="none" stroke="#d8d8d8" stroke-width="1"/><path d="M637.5 421.3V288H665.8V300M637.5 421.3H665.8V408" fill="none" stroke="#6a5210" stroke-width="1.3"/><path d="M643.3 291.7V402.5M643.3 402.5V417H665" fill="none" stroke="#999" stroke-width="0.9"/><rect x="428.7" y="259.2" width="7.6" height="7.6" fill="#0a0af0"/><rect x="428.7" y="331.7" width="7.6" height="7.6" fill="#0a0af0"/><rect x="427.6" y="274.1" width="9.8" height="52.09999999999999" fill="#fff" stroke="#1a1ae8" stroke-width="1.6"/><path fill="none" d="M429.0 275.3L436.0 325M436.0 275.3L429.0 325" stroke="#8888f4" stroke-width="0.6"/><rect x="428.7" y="374.7" width="7.6" height="7.6" fill="#0a0af0"/><rect x="428.7" y="443.5" width="7.6" height="7.6" fill="#0a0af0"/><rect x="427.6" y="386.6" width="9.8" height="51.799999999999976" fill="#fff" stroke="#1a1ae8" stroke-width="1.6"/><path fill="none" d="M429.0 387.8L436.0 437.2M436.0 387.8L429.0 437.2" stroke="#8888f4" stroke-width="0.6"/><rect x="501.9" y="259.2" width="7.6" height="7.6" fill="#0a0af0"/><rect x="501.9" y="331.7" width="7.6" height="7.6" fill="#0a0af0"/><rect x="500.8" y="274.1" width="9.8" height="52.09999999999999" fill="#fff" stroke="#1a1ae8" stroke-width="1.6"/><path fill="none" d="M502.2 275.3L509.2 325M509.2 275.3L502.2 325" stroke="#8888f4" stroke-width="0.6"/><rect x="501.9" y="374.7" width="7.6" height="7.6" fill="#0a0af0"/><rect x="501.9" y="443.5" width="7.6" height="7.6" fill="#0a0af0"/><rect x="500.8" y="386.6" width="9.8" height="51.799999999999976" fill="#fff" stroke="#1a1ae8" stroke-width="1.6"/><path fill="none" d="M502.2 387.8L509.2 437.2M509.2 387.8L502.2 437.2" stroke="#8888f4" stroke-width="0.6"/><rect x="576.2" y="259.2" width="7.6" height="7.6" fill="#0a0af0"/><rect x="576.2" y="331.7" width="7.6" height="7.6" fill="#0a0af0"/><rect x="575.1" y="274.1" width="9.8" height="52.09999999999999" fill="#fff" stroke="#1a1ae8" stroke-width="1.6"/><path fill="none" d="M576.5 275.3L583.5 325M583.5 275.3L576.5 325" stroke="#8888f4" stroke-width="0.6"/><rect x="576.2" y="374.7" width="7.6" height="7.6" fill="#0a0af0"/><rect x="576.2" y="443.5" width="7.6" height="7.6" fill="#0a0af0"/><rect x="575.1" y="386.6" width="9.8" height="51.799999999999976" fill="#fff" stroke="#1a1ae8" stroke-width="1.6"/><path fill="none" d="M576.5 387.8L583.5 437.2M583.5 387.8L576.5 437.2" stroke="#8888f4" stroke-width="0.6"/><rect x="650.0" y="259.2" width="7.6" height="7.6" fill="#0a0af0"/><rect x="650.0" y="331.7" width="7.6" height="7.6" fill="#0a0af0"/><rect x="648.9" y="274.1" width="9.8" height="52.09999999999999" fill="#fff" stroke="#1a1ae8" stroke-width="1.6"/><path fill="none" d="M650.3 275.3L657.3 325M657.3 275.3L650.3 325" stroke="#8888f4" stroke-width="0.6"/><rect x="650.0" y="374.7" width="7.6" height="7.6" fill="#0a0af0"/><rect x="650.0" y="443.5" width="7.6" height="7.6" fill="#0a0af0"/><rect x="648.9" y="386.6" width="9.8" height="51.799999999999976" fill="#fff" stroke="#1a1ae8" stroke-width="1.6"/><path fill="none" d="M650.3 387.8L657.3 437.2M657.3 387.8L650.3 437.2" stroke="#8888f4" stroke-width="0.6"/><rect x="446.7" y="444.2" width="7.6" height="7.6" fill="#0a0af0"/><rect x="474.7" y="445" width="7.8" height="7.6" fill="#0a0af0"/><path fill="none" d="M666.2 301.3V407.5" stroke="#1010f0" stroke-width="4.6"/><rect x="704.5" y="266.5" width="6" height="176" fill="none" stroke="#d8d8d8" stroke-width="1"/><path fill="none" d="M709.3 300.8V396.7" stroke="#666" stroke-width="1.8"/><path fill="none" d="M709.3 396.7V406.7" stroke="#222" stroke-width="2.6"/><g transform="translate(403,252.0)"><path fill="none" d="M0.6 3V17M1.9 2V18" stroke="#333" stroke-width="0.9" stroke-dasharray="1.2 0.5"/><rect x="2.3" y="1.2" width="4.4" height="17.6" rx="0.8" fill="#050505"/><path fill="none" d="M6 1.2Q12.5 10 6 18.8M8 1Q15.5 10 8 19M10.5 1.4Q17.5 10 10.5 18.6" stroke="#111" stroke-width="1.3"/><path fill="none" d="M6.5 3L20 17.5M6.5 17L20 2.5" stroke="#050505" stroke-width="1.9"/><path fill="none" d="M8 1.2H17.5M8 18.8H17.5M18.8 2.5V17.5" stroke="#444" stroke-width="1"/></g><g transform="translate(403,277.8)"><path fill="none" d="M0.6 3V17M1.9 2V18" stroke="#333" stroke-width="0.9" stroke-dasharray="1.2 0.5"/><rect x="2.3" y="1.2" width="4.4" height="17.6" rx="0.8" fill="#050505"/><path fill="none" d="M6 1.2Q12.5 10 6 18.8M8 1Q15.5 10 8 19M10.5 1.4Q17.5 10 10.5 18.6" stroke="#111" stroke-width="1.3"/><path fill="none" d="M6.5 3L20 17.5M6.5 17L20 2.5" stroke="#050505" stroke-width="1.9"/><path fill="none" d="M8 1.2H17.5M8 18.8H17.5M18.8 2.5V17.5" stroke="#444" stroke-width="1"/></g><g transform="translate(403,303.7)"><path fill="none" d="M0.6 3V17M1.9 2V18" stroke="#333" stroke-width="0.9" stroke-dasharray="1.2 0.5"/><rect x="2.3" y="1.2" width="4.4" height="17.6" rx="0.8" fill="#050505"/><path fill="none" d="M6 1.2Q12.5 10 6 18.8M8 1Q15.5 10 8 19M10.5 1.4Q17.5 10 10.5 18.6" stroke="#111" stroke-width="1.3"/><path fill="none" d="M6.5 3L20 17.5M6.5 17L20 2.5" stroke="#050505" stroke-width="1.9"/><path fill="none" d="M8 1.2H17.5M8 18.8H17.5M18.8 2.5V17.5" stroke="#444" stroke-width="1"/></g><g transform="translate(403,329.5)"><path fill="none" d="M0.6 3V17M1.9 2V18" stroke="#333" stroke-width="0.9" stroke-dasharray="1.2 0.5"/><rect x="2.3" y="1.2" width="4.4" height="17.6" rx="0.8" fill="#050505"/><path fill="none" d="M6 1.2Q12.5 10 6 18.8M8 1Q15.5 10 8 19M10.5 1.4Q17.5 10 10.5 18.6" stroke="#111" stroke-width="1.3"/><path fill="none" d="M6.5 3L20 17.5M6.5 17L20 2.5" stroke="#050505" stroke-width="1.9"/><path fill="none" d="M8 1.2H17.5M8 18.8H17.5M18.8 2.5V17.5" stroke="#444" stroke-width="1"/></g><g transform="translate(402,400.3)"><path fill="none" d="M0.6 3V17M1.9 2V18" stroke="#333" stroke-width="0.9" stroke-dasharray="1.2 0.5"/><rect x="2.3" y="1.2" width="4.4" height="17.6" rx="0.8" fill="#050505"/><path fill="none" d="M6 1.2Q12.5 10 6 18.8M8 1Q15.5 10 8 19M10.5 1.4Q17.5 10 10.5 18.6" stroke="#111" stroke-width="1.3"/><path fill="none" d="M6.5 3L20 17.5M6.5 17L20 2.5" stroke="#050505" stroke-width="1.9"/><path fill="none" d="M8 1.2H17.5M8 18.8H17.5M18.8 2.5V17.5" stroke="#444" stroke-width="1"/></g><g transform="translate(402,426.2)"><path fill="none" d="M0.6 3V17M1.9 2V18" stroke="#333" stroke-width="0.9" stroke-dasharray="1.2 0.5"/><rect x="2.3" y="1.2" width="4.4" height="17.6" rx="0.8" fill="#050505"/><path fill="none" d="M6 1.2Q12.5 10 6 18.8M8 1Q15.5 10 8 19M10.5 1.4Q17.5 10 10.5 18.6" stroke="#111" stroke-width="1.3"/><path fill="none" d="M6.5 3L20 17.5M6.5 17L20 2.5" stroke="#050505" stroke-width="1.9"/><path fill="none" d="M8 1.2H17.5M8 18.8H17.5M18.8 2.5V17.5" stroke="#444" stroke-width="1"/></g><g transform="translate(402,452.8)"><path fill="none" d="M0.6 3V17M1.9 2V18" stroke="#333" stroke-width="0.9" stroke-dasharray="1.2 0.5"/><rect x="2.3" y="1.2" width="4.4" height="17.6" rx="0.8" fill="#050505"/><path fill="none" d="M6 1.2Q12.5 10 6 18.8M8 1Q15.5 10 8 19M10.5 1.4Q17.5 10 10.5 18.6" stroke="#111" stroke-width="1.3"/><path fill="none" d="M6.5 3L20 17.5M6.5 17L20 2.5" stroke="#050505" stroke-width="1.9"/><path fill="none" d="M8 1.2H17.5M8 18.8H17.5M18.8 2.5V17.5" stroke="#444" stroke-width="1"/></g><g transform="translate(465,252.0)"><path fill="none" d="M0.6 3V17M1.9 2V18" stroke="#333" stroke-width="0.9" stroke-dasharray="1.2 0.5"/><rect x="2.3" y="1.2" width="4.4" height="17.6" rx="0.8" fill="#050505"/><path fill="none" d="M6 1.2Q12.5 10 6 18.8M8 1Q15.5 10 8 19M10.5 1.4Q17.5 10 10.5 18.6" stroke="#111" stroke-width="1.3"/><path fill="none" d="M6.5 3L20 17.5M6.5 17L20 2.5" stroke="#050505" stroke-width="1.9"/><path fill="none" d="M8 1.2H17.5M8 18.8H17.5M18.8 2.5V17.5" stroke="#444" stroke-width="1"/></g><g transform="translate(465,277.8)"><path fill="none" d="M0.6 3V17M1.9 2V18" stroke="#333" stroke-width="0.9" stroke-dasharray="1.2 0.5"/><rect x="2.3" y="1.2" width="4.4" height="17.6" rx="0.8" fill="#050505"/><path fill="none" d="M6 1.2Q12.5 10 6 18.8M8 1Q15.5 10 8 19M10.5 1.4Q17.5 10 10.5 18.6" stroke="#111" stroke-width="1.3"/><path fill="none" d="M6.5 3L20 17.5M6.5 17L20 2.5" stroke="#050505" stroke-width="1.9"/><path fill="none" d="M8 1.2H17.5M8 18.8H17.5M18.8 2.5V17.5" stroke="#444" stroke-width="1"/></g><g transform="translate(465,303.7)"><path fill="none" d="M0.6 3V17M1.9 2V18" stroke="#333" stroke-width="0.9" stroke-dasharray="1.2 0.5"/><rect x="2.3" y="1.2" width="4.4" height="17.6" rx="0.8" fill="#050505"/><path fill="none" d="M6 1.2Q12.5 10 6 18.8M8 1Q15.5 10 8 19M10.5 1.4Q17.5 10 10.5 18.6" stroke="#111" stroke-width="1.3"/><path fill="none" d="M6.5 3L20 17.5M6.5 17L20 2.5" stroke="#050505" stroke-width="1.9"/><path fill="none" d="M8 1.2H17.5M8 18.8H17.5M18.8 2.5V17.5" stroke="#444" stroke-width="1"/></g><g transform="translate(466,374.5)"><path fill="none" d="M0.6 3V17M1.9 2V18" stroke="#333" stroke-width="0.9" stroke-dasharray="1.2 0.5"/><rect x="2.3" y="1.2" width="4.4" height="17.6" rx="0.8" fill="#050505"/><path fill="none" d="M6 1.2Q12.5 10 6 18.8M8 1Q15.5 10 8 19M10.5 1.4Q17.5 10 10.5 18.6" stroke="#111" stroke-width="1.3"/><path fill="none" d="M6.5 3L20 17.5M6.5 17L20 2.5" stroke="#050505" stroke-width="1.9"/><path fill="none" d="M8 1.2H17.5M8 18.8H17.5M18.8 2.5V17.5" stroke="#444" stroke-width="1"/></g><g transform="translate(466,400.3)"><path fill="none" d="M0.6 3V17M1.9 2V18" stroke="#333" stroke-width="0.9" stroke-dasharray="1.2 0.5"/><rect x="2.3" y="1.2" width="4.4" height="17.6" rx="0.8" fill="#050505"/><path fill="none" d="M6 1.2Q12.5 10 6 18.8M8 1Q15.5 10 8 19M10.5 1.4Q17.5 10 10.5 18.6" stroke="#111" stroke-width="1.3"/><path fill="none" d="M6.5 3L20 17.5M6.5 17L20 2.5" stroke="#050505" stroke-width="1.9"/><path fill="none" d="M8 1.2H17.5M8 18.8H17.5M18.8 2.5V17.5" stroke="#444" stroke-width="1"/></g><g transform="translate(466,425.3)"><path fill="none" d="M0.6 3V17M1.9 2V18" stroke="#333" stroke-width="0.9" stroke-dasharray="1.2 0.5"/><rect x="2.3" y="1.2" width="4.4" height="17.6" rx="0.8" fill="#050505"/><path fill="none" d="M6 1.2Q12.5 10 6 18.8M8 1Q15.5 10 8 19M10.5 1.4Q17.5 10 10.5 18.6" stroke="#111" stroke-width="1.3"/><path fill="none" d="M6.5 3L20 17.5M6.5 17L20 2.5" stroke="#050505" stroke-width="1.9"/><path fill="none" d="M8 1.2H17.5M8 18.8H17.5M18.8 2.5V17.5" stroke="#444" stroke-width="1"/></g><g transform="translate(466,452.0)"><path fill="none" d="M0.6 3V17M1.9 2V18" stroke="#333" stroke-width="0.9" stroke-dasharray="1.2 0.5"/><rect x="2.3" y="1.2" width="4.4" height="17.6" rx="0.8" fill="#050505"/><path fill="none" d="M6 1.2Q12.5 10 6 18.8M8 1Q15.5 10 8 19M10.5 1.4Q17.5 10 10.5 18.6" stroke="#111" stroke-width="1.3"/><path fill="none" d="M6.5 3L20 17.5M6.5 17L20 2.5" stroke="#050505" stroke-width="1.9"/><path fill="none" d="M8 1.2H17.5M8 18.8H17.5M18.8 2.5V17.5" stroke="#444" stroke-width="1"/></g><g transform="translate(530.3,252.0)"><path fill="none" d="M0.6 3V17M1.9 2V18" stroke="#333" stroke-width="0.9" stroke-dasharray="1.2 0.5"/><rect x="2.3" y="1.2" width="4.4" height="17.6" rx="0.8" fill="#050505"/><path fill="none" d="M6 1.2Q12.5 10 6 18.8M8 1Q15.5 10 8 19M10.5 1.4Q17.5 10 10.5 18.6" stroke="#111" stroke-width="1.3"/><path fill="none" d="M6.5 3L20 17.5M6.5 17L20 2.5" stroke="#050505" stroke-width="1.9"/><path fill="none" d="M8 1.2H17.5M8 18.8H17.5M18.8 2.5V17.5" stroke="#444" stroke-width="1"/></g><g transform="translate(530.3,277.8)"><path fill="none" d="M0.6 3V17M1.9 2V18" stroke="#333" stroke-width="0.9" stroke-dasharray="1.2 0.5"/><rect x="2.3" y="1.2" width="4.4" height="17.6" rx="0.8" fill="#050505"/><path fill="none" d="M6 1.2Q12.5 10 6 18.8M8 1Q15.5 10 8 19M10.5 1.4Q17.5 10 10.5 18.6" stroke="#111" stroke-width="1.3"/><path fill="none" d="M6.5 3L20 17.5M6.5 17L20 2.5" stroke="#050505" stroke-width="1.9"/><path fill="none" d="M8 1.2H17.5M8 18.8H17.5M18.8 2.5V17.5" stroke="#444" stroke-width="1"/></g><g transform="translate(530.3,303.7)"><path fill="none" d="M0.6 3V17M1.9 2V18" stroke="#333" stroke-width="0.9" stroke-dasharray="1.2 0.5"/><rect x="2.3" y="1.2" width="4.4" height="17.6" rx="0.8" fill="#050505"/><path fill="none" d="M6 1.2Q12.5 10 6 18.8M8 1Q15.5 10 8 19M10.5 1.4Q17.5 10 10.5 18.6" stroke="#111" stroke-width="1.3"/><path fill="none" d="M6.5 3L20 17.5M6.5 17L20 2.5" stroke="#050505" stroke-width="1.9"/><path fill="none" d="M8 1.2H17.5M8 18.8H17.5M18.8 2.5V17.5" stroke="#444" stroke-width="1"/></g><g transform="translate(530.3,329.5)"><path fill="none" d="M0.6 3V17M1.9 2V18" stroke="#333" stroke-width="0.9" stroke-dasharray="1.2 0.5"/><rect x="2.3" y="1.2" width="4.4" height="17.6" rx="0.8" fill="#050505"/><path fill="none" d="M6 1.2Q12.5 10 6 18.8M8 1Q15.5 10 8 19M10.5 1.4Q17.5 10 10.5 18.6" stroke="#111" stroke-width="1.3"/><path fill="none" d="M6.5 3L20 17.5M6.5 17L20 2.5" stroke="#050505" stroke-width="1.9"/><path fill="none" d="M8 1.2H17.5M8 18.8H17.5M18.8 2.5V17.5" stroke="#444" stroke-width="1"/></g><g transform="translate(529.5,401.3)"><path fill="none" d="M0.6 3V17M1.9 2V18" stroke="#333" stroke-width="0.9" stroke-dasharray="1.2 0.5"/><rect x="2.3" y="1.2" width="4.4" height="17.6" rx="0.8" fill="#050505"/><path fill="none" d="M6 1.2Q12.5 10 6 18.8M8 1Q15.5 10 8 19M10.5 1.4Q17.5 10 10.5 18.6" stroke="#111" stroke-width="1.3"/><path fill="none" d="M6.5 3L20 17.5M6.5 17L20 2.5" stroke="#050505" stroke-width="1.9"/><path fill="none" d="M8 1.2H17.5M8 18.8H17.5M18.8 2.5V17.5" stroke="#444" stroke-width="1"/></g><g transform="translate(529.5,427.5)"><path fill="none" d="M0.6 3V17M1.9 2V18" stroke="#333" stroke-width="0.9" stroke-dasharray="1.2 0.5"/><rect x="2.3" y="1.2" width="4.4" height="17.6" rx="0.8" fill="#050505"/><path fill="none" d="M6 1.2Q12.5 10 6 18.8M8 1Q15.5 10 8 19M10.5 1.4Q17.5 10 10.5 18.6" stroke="#111" stroke-width="1.3"/><path fill="none" d="M6.5 3L20 17.5M6.5 17L20 2.5" stroke="#050505" stroke-width="1.9"/><path fill="none" d="M8 1.2H17.5M8 18.8H17.5M18.8 2.5V17.5" stroke="#444" stroke-width="1"/></g><g transform="translate(529.5,454.0)"><path fill="none" d="M0.6 3V17M1.9 2V18" stroke="#333" stroke-width="0.9" stroke-dasharray="1.2 0.5"/><rect x="2.3" y="1.2" width="4.4" height="17.6" rx="0.8" fill="#050505"/><path fill="none" d="M6 1.2Q12.5 10 6 18.8M8 1Q15.5 10 8 19M10.5 1.4Q17.5 10 10.5 18.6" stroke="#111" stroke-width="1.3"/><path fill="none" d="M6.5 3L20 17.5M6.5 17L20 2.5" stroke="#050505" stroke-width="1.9"/><path fill="none" d="M8 1.2H17.5M8 18.8H17.5M18.8 2.5V17.5" stroke="#444" stroke-width="1"/></g><g transform="translate(683.5,344) scale(-1,1)"><g transform="translate(0,0)"><path fill="none" d="M0.6 3V17M1.9 2V18" stroke="#333" stroke-width="0.9" stroke-dasharray="1.2 0.5"/><rect x="2.3" y="1.2" width="4.4" height="17.6" rx="0.8" fill="#050505"/><path fill="none" d="M6 1.2Q12.5 10 6 18.8M8 1Q15.5 10 8 19M10.5 1.4Q17.5 10 10.5 18.6" stroke="#111" stroke-width="1.3"/><path fill="none" d="M6.5 3L20 17.5M6.5 17L20 2.5" stroke="#050505" stroke-width="1.9"/><path fill="none" d="M8 1.2H17.5M8 18.8H17.5M18.8 2.5V17.5" stroke="#444" stroke-width="1"/></g></g><path d="M680.8 247.5L692.5 242.5L706.3 265.8L694.2 274.2Z" fill="#fff" stroke="#555" stroke-width="1.2"/><path fill="none" d="M672.5 256.3L687 250M682.5 275.8L697 269M695.8 256.5L706.5 251" stroke="#222" stroke-width="1.6"/><path fill="none" d="M370.6 489V461M370.6 489H397" stroke="#0a0a0a" stroke-width="2"/><path d="M367.2 463L370.6 455.8L374 463Z M396 485.6L403.3 489L396 492.4Z" fill="#0a0a0a"/><circle cx="370.6" cy="489" r="2.6" fill="#0a0a0a"/></svg>
<div class="t" style="left:338.3px;top:614.90px;font-size:6.6px;color:#1a1a1a;font-weight:bold;">Ground area</div>
<div class="t" style="left:419.3px;top:614.85px;font-size:6.7px;color:#444;font-weight:normal;">70.05 m²</div>
<div class="a" style="left:334px;top:625px;width:151px;height:2px;background:#626262;"></div>
<div class="t" style="left:338.3px;top:633.30px;font-size:6.6px;color:#1a1a1a;font-weight:bold;">Reflection factors</div>
<div class="t" style="left:419.3px;top:633.25px;font-size:6.7px;color:#444;font-weight:normal;">Ceiling: 70.0 %,</div>
<div class="t" style="left:419.3px;top:641.95px;font-size:6.7px;color:#444;font-weight:normal;">Walls: 88.0 %,</div>
<div class="t" style="left:419.3px;top:650.75px;font-size:6.7px;color:#444;font-weight:normal;">Floor: 20.0 %</div>
<div class="a" style="left:334px;top:661.5px;width:151px;height:2px;background:#626262;"></div>
<div class="t" style="left:338.3px;top:669.20px;font-size:6.6px;color:#1a1a1a;font-weight:bold;">Maintenance factor</div>
<div class="t" style="left:419.3px;top:669.15px;font-size:6.7px;color:#444;font-weight:normal;">0.80 (fixed)</div>
<div class="a" style="left:334px;top:679.5px;width:151px;height:2px;background:#626262;"></div>
<div class="t" style="left:507px;top:650.80px;font-size:6.6px;color:#1a1a1a;font-weight:bold;">Clearance height</div>
<div class="t" style="left:587.4px;top:650.75px;font-size:6.7px;color:#444;font-weight:normal;">3.000 m</div>
<div class="a" style="left:503px;top:661.5px;width:151px;height:2px;background:#626262;"></div>
<div class="t" style="left:507px;top:669.20px;font-size:6.6px;color:#1a1a1a;font-weight:bold;">Mounting height</div>
<div class="t" style="left:587.4px;top:669.15px;font-size:6.7px;color:#444;font-weight:normal;">2.985 m - 3.080 m</div>
<div class="a" style="left:503px;top:679.5px;width:151px;height:2px;background:#626262;"></div>
<div class="t" style="left:830px;top:93.80px;font-size:5.6px;color:#111;font-weight:bold;">School lighting design</div>
<div class="t" style="left:1159px;top:87.4px;font-size:28.3px;color:#111;letter-spacing:-0.6px;transform:scaleX(0.854);transform-origin:0 0;-webkit-text-stroke:0.35px #111">DIAL<b style="font-weight:bold;-webkit-text-stroke:0.5px #111">ux</b></div>
<div class="t" style="left:830px;top:158.70px;font-size:9.4px;color:#3a3a3a;font-weight:normal;">Site - school - ground floor - classroom 2 (Light scene overall)</div>
<div class="t" style="left:830px;top:173.67px;font-size:11.85px;color:#111;font-weight:bold;">Summary</div>
<div class="t" style="left:830px;top:202.80px;font-size:9.0px;color:#333;font-weight:normal;">Results</div>
<div class="t" style="left:925px;top:226.10px;font-size:6.6px;color:#1a1a1a;font-weight:bold;">Symbol</div>
<div class="t" style="left:1007.6px;top:226.10px;font-size:6.6px;color:#1a1a1a;font-weight:bold;">Calculated</div>
<div class="t" style="left:1091px;top:226.10px;font-size:6.6px;color:#1a1a1a;font-weight:bold;">Target</div>
<div class="t" style="left:1173.7px;top:226.10px;font-size:6.6px;color:#1a1a1a;font-weight:bold;">Check</div>
<div class="t" style="left:1215.6px;top:226.10px;font-size:6.6px;color:#1a1a1a;font-weight:bold;">Index</div>
<div class="a" style="left:829px;top:237.2px;width:412px;height:2px;background:#626262;"></div>
<div class="t" style="left:833.5px;top:244.75px;font-size:6.5px;color:#1a1a1a;font-weight:bold;">Visual task areas</div>
<div class="t" style="left:925.5px;top:243.70px;font-size:7.4px;color:#333;font-weight:normal;font-family:'Liberation Serif',serif;font-style:italic">E</div>
<div class="t" style="left:931px;top:247.10px;font-size:4.6px;color:#444;font-weight:normal;">Task Area</div>
<div class="t" style="left:1007.6px;top:244.55px;font-size:6.7px;color:#3a3a3a;font-weight:normal;">2128 lx</div>
<div class="t" style="left:1091px;top:244.55px;font-size:6.7px;color:#3a3a3a;font-weight:normal;">≥ 750 lx</div>
<svg class="a" style="left:1174px;top:242.89999999999998px" width="11" height="10"><path d="M0.6 4.6L3.6 7.8L9.4 0.8" fill="none" stroke="#26b826" stroke-width="1.9"/></svg>
<div class="a" style="left:1216.3px;top:241.29999999999998px;width:15.5px;height:13.2px;background:#fff;border:1.8px solid #3a3a3a;border-radius:2px"></div>
<div class="t" style="left:1219.5px;top:245.30px;font-size:5.6px;color:#555;font-weight:normal;letter-spacing:-0.2px">ET1</div>
<div class="a" style="left:921.3px;top:255.2px;width:320px;height:2px;background:#626262;"></div>
<div class="t" style="left:925px;top:263.10px;font-size:6.2px;color:#333;font-weight:normal;font-style:italic">g</div>
<div class="t" style="left:928.8px;top:265.80px;font-size:3.0px;color:#444;font-weight:normal;">1</div>
<div class="t" style="left:933.5px;top:265.40px;font-size:4.6px;color:#444;font-weight:normal;">Task Area</div>
<div class="t" style="left:1007.6px;top:263.35px;font-size:6.7px;color:#3a3a3a;font-weight:normal;">0.48</div>
<div class="t" style="left:1091px;top:263.35px;font-size:6.7px;color:#3a3a3a;font-weight:normal;">≥ 0.60</div>
<svg class="a" style="left:1174.8px;top:262.2px" width="9" height="9"><path d="M0.8 0.8L7.2 7.6M7.2 0.8L0.8 7.6" fill="none" stroke="#e02828" stroke-width="1.7"/></svg>
<div class="a" style="left:1216.3px;top:260.09999999999997px;width:15.5px;height:13.2px;background:#fff;border:1.8px solid #3a3a3a;border-radius:2px"></div>
<div class="t" style="left:1219.5px;top:264.10px;font-size:5.6px;color:#555;font-weight:normal;letter-spacing:-0.2px">ET1</div>
<div class="a" style="left:921.3px;top:274px;width:320px;height:2px;background:#626262;"></div>
<div class="t" style="left:925.5px;top:281.00px;font-size:7.4px;color:#333;font-weight:normal;font-family:'Liberation Serif',serif;font-style:italic">E</div>
<div class="t" style="left:931px;top:284.40px;font-size:4.6px;color:#444;font-weight:normal;">Surrounding area</div>
<div class="t" style="left:1007.6px;top:281.85px;font-size:6.7px;color:#3a3a3a;font-weight:normal;">1149 lx</div>
<div class="t" style="left:1091px;top:281.85px;font-size:6.7px;color:#3a3a3a;font-weight:normal;">≥ 500 lx</div>
<svg class="a" style="left:1174px;top:280.2px" width="11" height="10"><path d="M0.6 4.6L3.6 7.8L9.4 0.8" fill="none" stroke="#26b826" stroke-width="1.9"/></svg>
<div class="a" style="left:1216.3px;top:278.59999999999997px;width:15.5px;height:13.2px;background:#fff;border:1.8px solid #3a3a3a;border-radius:2px"></div>
<div class="t" style="left:1219.5px;top:282.60px;font-size:5.6px;color:#555;font-weight:normal;letter-spacing:-0.2px">ES1</div>
<div class="a" style="left:921.3px;top:292.5px;width:320px;height:2px;background:#626262;"></div>
<div class="t" style="left:925px;top:300.40px;font-size:6.2px;color:#333;font-weight:normal;font-style:italic">g</div>
<div class="t" style="left:928.8px;top:303.10px;font-size:3.0px;color:#444;font-weight:normal;">1</div>
<div class="t" style="left:933.5px;top:302.70px;font-size:4.6px;color:#444;font-weight:normal;">Surrounding area</div>
<div class="t" style="left:1007.6px;top:300.65px;font-size:6.7px;color:#3a3a3a;font-weight:normal;">0.51</div>
<div class="t" style="left:1091px;top:300.65px;font-size:6.7px;color:#3a3a3a;font-weight:normal;">≥ 0.40</div>
<svg class="a" style="left:1174px;top:299.0px" width="11" height="10"><path d="M0.6 4.6L3.6 7.8L9.4 0.8" fill="none" stroke="#26b826" stroke-width="1.9"/></svg>
<div class="a" style="left:1216.3px;top:297.4px;width:15.5px;height:13.2px;background:#fff;border:1.8px solid #3a3a3a;border-radius:2px"></div>
<div class="t" style="left:1219.5px;top:301.40px;font-size:5.6px;color:#555;font-weight:normal;letter-spacing:-0.2px">ES1</div>
<div class="a" style="left:921.3px;top:311.3px;width:320px;height:2px;background:#626262;"></div>
<div class="t" style="left:925.5px;top:318.50px;font-size:7.4px;color:#333;font-weight:normal;font-family:'Liberation Serif',serif;font-style:italic">E</div>
<div class="t" style="left:931px;top:321.90px;font-size:4.6px;color:#444;font-weight:normal;">Background area</div>
<div class="t" style="left:1007.6px;top:319.35px;font-size:6.7px;color:#3a3a3a;font-weight:normal;">635 lx</div>
<div class="t" style="left:1091px;top:319.35px;font-size:6.7px;color:#3a3a3a;font-weight:normal;">≥ 150 lx</div>
<svg class="a" style="left:1174px;top:317.7px" width="11" height="10"><path d="M0.6 4.6L3.6 7.8L9.4 0.8" fill="none" stroke="#26b826" stroke-width="1.9"/></svg>
<div class="a" style="left:1216.3px;top:316.09999999999997px;width:15.5px;height:13.2px;background:#fff;border:1.8px solid #3a3a3a;border-radius:2px"></div>
<div class="t" style="left:1219.5px;top:320.10px;font-size:5.6px;color:#555;font-weight:normal;letter-spacing:-0.2px">EB1</div>
<div class="a" style="left:921.3px;top:330px;width:320px;height:2px;background:#626262;"></div>
<div class="t" style="left:925px;top:338.10px;font-size:6.2px;color:#333;font-weight:normal;font-style:italic">g</div>
<div class="t" style="left:928.8px;top:340.80px;font-size:3.0px;color:#444;font-weight:normal;">1</div>
<div class="t" style="left:933.5px;top:340.40px;font-size:4.6px;color:#444;font-weight:normal;">Background area</div>
<div class="t" style="left:1007.6px;top:338.35px;font-size:6.7px;color:#3a3a3a;font-weight:normal;">0.18</div>
<div class="t" style="left:1091px;top:338.35px;font-size:6.7px;color:#3a3a3a;font-weight:normal;">≥ 0.10</div>
<svg class="a" style="left:1174px;top:336.7px" width="11" height="10"><path d="M0.6 4.6L3.6 7.8L9.4 0.8" fill="none" stroke="#26b826" stroke-width="1.9"/></svg>
<div class="a" style="left:1216.3px;top:335.09999999999997px;width:15.5px;height:13.2px;background:#fff;border:1.8px solid #3a3a3a;border-radius:2px"></div>
<div class="t" style="left:1219.5px;top:339.10px;font-size:5.6px;color:#555;font-weight:normal;letter-spacing:-0.2px">EB1</div>
<div class="a" style="left:828.6px;top:349px;width:412px;height:2px;background:#626262;"></div>
<div class="t" style="left:833.4px;top:356.75px;font-size:6.5px;color:#1a1a1a;font-weight:bold;">Glare valuation⁽¹⁾</div>
<div class="t" style="left:925.7px;top:356.40px;font-size:6.8px;color:#3a3a3a;font-weight:normal;">R</div>
<div class="t" style="left:930.6px;top:359.30px;font-size:4.4px;color:#3a3a3a;font-weight:normal;">UG,max</div>
<div class="t" style="left:1007.6px;top:355.85px;font-size:6.7px;color:#3a3a3a;font-weight:normal;">16</div>
<div class="t" style="left:1091px;top:355.85px;font-size:6.7px;color:#3a3a3a;font-weight:normal;">≤ 19</div>
<svg class="a" style="left:1174px;top:354.2px" width="11" height="10"><path d="M0.6 4.6L3.6 7.8L9.4 0.8" fill="none" stroke="#26b826" stroke-width="1.9"/></svg>
<div class="a" style="left:828.6px;top:367.2px;width:412px;height:2px;background:#626262;"></div>
<div class="a" style="left:824.5px;top:344.3px;width:419.5px;height:30px;background:transparent;border:3.3px solid #66cc00"></div>
<div class="a" style="left:825px;top:377.4px;width:419px;height:52.5px;background:transparent;border:3.3px solid #66cc00"></div>
<div class="t" style="left:830px;top:386.47px;font-size:5.45px;color:#333;font-weight:normal;">(1) Based on a rectangular space of 7.212 m x 9.713 m and SHR of 0.25.</div>
<div class="t" style="left:830px;top:400.62px;font-size:5.55px;color:#333;font-weight:normal;font-style:italic">Utilisation profile: Educational premises - Educational buildings (44.1 Classrooms for evening classes and adult education)</div>
<div class="t" style="left:830px;top:408.23px;font-size:5.55px;color:#333;font-weight:normal;">The maintenance values of the illuminances (target values) are modified by +1 step. Reasons:</div>
<div class="t" style="left:830px;top:415.50px;font-size:5.6px;color:#333;font-weight:normal;">• Accuracy, higher productivity or increased concentration are of great importance.</div>
<div class="t" style="left:830px;top:440.50px;font-size:9.0px;color:#333;font-weight:normal;">Luminaire list</div>
<div class="t" style="left:832.6px;top:464.00px;font-size:6.6px;color:#1a1a1a;font-weight:bold;">pcs.</div>
<div class="t" style="left:859.8px;top:464.00px;font-size:6.6px;color:#1a1a1a;font-weight:bold;">Manufacturer</div>
<div class="t" style="left:909px;top:464.00px;font-size:6.6px;color:#1a1a1a;font-weight:bold;">Article No.</div>
<div class="t" style="left:947.2px;top:464.00px;font-size:6.6px;color:#1a1a1a;font-weight:bold;">Article name</div>
<div class="t" style="left:1110.6px;top:464.00px;font-size:6.6px;color:#1a1a1a;font-weight:bold;">P</div>
<div class="t" style="left:1145.4px;top:464.00px;font-size:6.6px;color:#1a1a1a;font-weight:bold;">Φ</div>
<div class="t" style="left:1179.6px;top:464.00px;font-size:6.6px;color:#1a1a1a;font-weight:bold;">Luminous efficacy</div>
<div class="t" style="left:1089px;top:464.00px;font-size:6.6px;color:#1a1a1a;font-weight:bold;">R</div>
<div class="t" style="left:1093.8px;top:466.80px;font-size:4.2px;color:#1a1a1a;font-weight:bold;">UG</div>
<div class="a" style="left:829px;top:476.6px;width:22px;height:2px;background:#626262;"></div>
<div class="a" style="left:856px;top:476.6px;width:384.5px;height:2px;background:#626262;"></div>
<div class="a" style="left:829px;top:497px;width:22px;height:2px;background:#626262;"></div>
<div class="a" style="left:856px;top:497px;width:384.5px;height:2px;background:#626262;"></div>
<div class="a" style="left:829px;top:516.8px;width:22px;height:2px;background:#626262;"></div>
<div class="a" style="left:856px;top:516.8px;width:384.5px;height:2px;background:#626262;"></div>
<div class="a" style="left:829px;top:536.4px;width:22px;height:2px;background:#626262;"></div>
<div class="a" style="left:856px;top:536.4px;width:384.5px;height:2px;background:#626262;"></div>
<div class="a" style="left:829px;top:556.6px;width:22px;height:2px;background:#626262;"></div>
<div class="a" style="left:856px;top:556.6px;width:384.5px;height:2px;background:#626262;"></div>
<div class="t" style="left:832.6px;top:484.85px;font-size:6.7px;color:#3a3a3a;font-weight:normal;">16</div>
<div class="t" style="left:859.8px;top:484.85px;font-size:6.7px;color:#3a3a3a;font-weight:normal;">Oktalite</div>
<div class="t" style="left:909px;top:484.85px;font-size:6.7px;color:#3a3a3a;font-weight:normal;">-</div>
<div class="t" style="left:947.2px;top:484.98px;font-size:6.45px;color:#3a3a3a;font-weight:normal;">Sistema LED 2700K SP silver 9016</div>
<div class="t" style="left:1089px;top:484.85px;font-size:6.7px;color:#3a3a3a;font-weight:normal;">12</div>
<div class="t" style="left:1110.6px;top:484.85px;font-size:6.7px;color:#3a3a3a;font-weight:normal;">35.0 W</div>
<div class="t" style="left:1145.4px;top:484.85px;font-size:6.7px;color:#3a3a3a;font-weight:normal;">3394 lm</div>
<div class="t" style="left:1179.6px;top:484.85px;font-size:6.7px;color:#3a3a3a;font-weight:normal;">97.0 lm/W</div>
<div class="t" style="left:832.6px;top:505.25px;font-size:6.7px;color:#3a3a3a;font-weight:normal;">2</div>
<div class="t" style="left:859.8px;top:505.25px;font-size:6.7px;color:#3a3a3a;font-weight:normal;">Oktalite</div>
<div class="t" style="left:909px;top:505.25px;font-size:6.7px;color:#3a3a3a;font-weight:normal;">-</div>
<div class="t" style="left:947.2px;top:505.38px;font-size:6.45px;color:#3a3a3a;font-weight:normal;">Sistema LED 3000K VFL silver 9016</div>
<div class="t" style="left:1089px;top:505.25px;font-size:6.7px;color:#3a3a3a;font-weight:normal;">16</div>
<div class="t" style="left:1110.6px;top:505.25px;font-size:6.7px;color:#3a3a3a;font-weight:normal;">35.0 W</div>
<div class="t" style="left:1145.4px;top:505.25px;font-size:6.7px;color:#3a3a3a;font-weight:normal;">3201 lm</div>
<div class="t" style="left:1179.6px;top:505.25px;font-size:6.7px;color:#3a3a3a;font-weight:normal;">91.5 lm/W</div>
<div class="t" style="left:832.6px;top:525.05px;font-size:6.7px;color:#3a3a3a;font-weight:normal;">8</div>
<div class="t" style="left:859.8px;top:525.05px;font-size:6.7px;color:#3a3a3a;font-weight:normal;">ZUMTOBEL</div>
<div class="t" style="left:909px;top:525.05px;font-size:6.7px;color:#3a3a3a;font-weight:normal;">42176798</div>
<div class="t" style="left:947.2px;top:525.17px;font-size:6.45px;color:#3a3a3a;font-weight:normal;">L-FIELDS E 2/35W T16 M600 LDE [STD]</div>
<div class="t" style="left:1089px;top:525.05px;font-size:6.7px;color:#3a3a3a;font-weight:normal;">15</div>
<div class="t" style="left:1110.6px;top:525.05px;font-size:6.7px;color:#3a3a3a;font-weight:normal;">75.5 W</div>
<div class="t" style="left:1145.4px;top:525.05px;font-size:6.7px;color:#3a3a3a;font-weight:normal;">4615 lm</div>
<div class="t" style="left:1179.6px;top:525.05px;font-size:6.7px;color:#3a3a3a;font-weight:normal;">61.1 lm/W</div>
<div class="t" style="left:832.6px;top:544.65px;font-size:6.7px;color:#3a3a3a;font-weight:normal;">2</div>
<div class="t" style="left:859.8px;top:544.65px;font-size:6.7px;color:#3a3a3a;font-weight:normal;">ZUMTOBEL</div>
<div class="t" style="left:909px;top:544.65px;font-size:6.7px;color:#3a3a3a;font-weight:normal;">42913164</div>
<div class="t" style="left:947.2px;top:544.77px;font-size:6.45px;color:#3a3a3a;font-weight:normal;">FEW 1/80W T16 M600 LDE [STD]</div>
<div class="t" style="left:1089px;top:544.65px;font-size:6.7px;color:#3a3a3a;font-weight:normal;">-</div>
<div class="t" style="left:1110.6px;top:544.65px;font-size:6.7px;color:#3a3a3a;font-weight:normal;">86.0 W</div>
<div class="t" style="left:1145.4px;top:544.65px;font-size:6.7px;color:#3a3a3a;font-weight:normal;">4682 lm</div>
<div class="t" style="left:1179.6px;top:544.65px;font-size:6.7px;color:#3a3a3a;font-weight:normal;">54.4 lm/W</div>
<div class="a" style="left:1077.5px;top:445px;width:28.5px;height:119.5px;background:transparent;border:3.3px solid #66cc00"></div>
</body></html>
